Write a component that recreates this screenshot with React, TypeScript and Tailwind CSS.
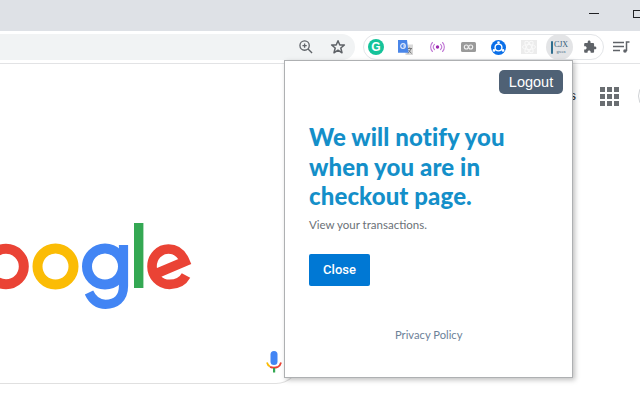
import React from "react";

function Logo() {
  return (
    <svg width="200" height="95" viewBox="0 220 200 95" fill="none" className="block">
      <circle cx="6" cy="266.5" r="17.8" stroke="#ea4335" strokeWidth="10" />
      <circle cx="55.5" cy="266.5" r="18" stroke="#fbbc05" strokeWidth="10" />
      <circle cx="105" cy="266.5" r="18" stroke="#4285f4" strokeWidth="10" />
      <path d="M123.5 245V286C123.5 299 115 304.300 105.500 304.300C97.500 304.300 92 299 89 292.500" stroke="#4285f4" strokeWidth="9.200" />
      <rect x="134" y="223" width="9.400" height="65" fill="#34a853" />
      <path d="M186 275.500C183 281 177 284.400 169.500 284.400C159.500 284.400 152 276 152 266.500C152 256.500 159.500 249 168.500 249C176 249 181.500 253 185 261.500L156.500 273.500" stroke="#ea4335" strokeWidth="9.600" />
    </svg>
  );
}

function Mic() {
  return (
    <svg width="16" height="22" viewBox="0 0 16 22" fill="none">
      <rect x="4.500" y="0" width="7" height="14" rx="3.500" fill="#4285f4" />
      <path d="M1 11.500C1.500 13.500 2.500 15 4 15.500" stroke="#fbbc05" strokeWidth="1.800" />
      <path d="M4 15.800C6.500 16.800 9.500 16.800 12 15.800C13.500 15 14.500 13.500 15 11.500" stroke="#ea4335" strokeWidth="1.800" />
      <rect x="7" y="17" width="2.200" height="4.500" fill="#34a853" />
    </svg>
  );
}

function ExtensionIcons() {
  return (
    <div className="flex h-[26px] w-[241px] items-center rounded-[13px] border border-[#e3e5e8] bg-white">
      <div className="flex h-[24px] w-[24px] items-center justify-center">
        <div className="flex h-[16px] w-[16px] items-center justify-center rounded-full bg-[#15c39a] font-['Liberation_Sans',sans-serif] text-[12px] font-bold leading-none text-white">
          G
        </div>
      </div>
      <div className="ml-[8px] flex h-[24px] w-[20px] items-center justify-center">
        <svg width="16" height="15" viewBox="0 0 16 15">
          <path d="M7.500 4.500H15V15H7.500Z" fill="#d9d9d9" />
          <path d="M9.500 8.500H14M11.700 7.500V8.500M10 13.500L13 9M10.500 10L13.500 13.500" stroke="#777" strokeWidth="1" fill="none" />
          <path d="M0 0H9L10.500 12.700H0Z" fill="#4a86e8" />
          <circle cx="5" cy="6" r="2.300" fill="none" stroke="#dfe8fb" strokeWidth="1.200" />
          <path d="M5 6H7.300" stroke="#dfe8fb" strokeWidth="1" />
        </svg>
      </div>
      <div className="ml-[11px] flex h-[24px] w-[20px] items-center justify-center">
        <svg width="15" height="12" viewBox="0 0 16 12" fill="none" stroke="#c27ad6" strokeWidth="1.200" strokeLinecap="round">
          <circle cx="8" cy="6" r="1.800" fill="#9c27b0" stroke="none" />
          <path d="M4.800 3.200A4 4 0 0 0 4.800 8.800M11.200 3.200A4 4 0 0 1 11.200 8.800" />
          <path d="M2.600 1.200A7 7 0 0 0 2.600 10.800M13.400 1.200A7 7 0 0 1 13.400 10.800" />
        </svg>
      </div>
      <div className="ml-[11px] flex h-[24px] w-[20px] items-center justify-center">
        <svg width="15" height="10" viewBox="0 0 15 10" fill="none">
          <rect width="15" height="10" rx="1.500" fill="#9a9a9a" />
          <circle cx="5.300" cy="5" r="2" stroke="#f2f2f2" strokeWidth="1.100" />
          <circle cx="9.700" cy="5" r="2" stroke="#f2f2f2" strokeWidth="1.100" />
        </svg>
      </div>
      <div className="ml-[10px] flex h-[24px] w-[20px] items-center justify-center">
        <svg width="15" height="15" viewBox="0 0 15 15" fill="none">
          <circle cx="7.500" cy="7.500" r="7.500" fill="#0a6fe8" />
          <circle cx="7.500" cy="7.500" r="3.400" stroke="#fff" strokeWidth="1.400" />
          <circle cx="7.500" cy="2.600" r="1.300" fill="#fff" />
          <circle cx="3" cy="10.400" r="1.300" fill="#fff" />
          <circle cx="12" cy="10.400" r="1.300" fill="#fff" />
        </svg>
      </div>
      <div className="ml-[11px] flex h-[24px] w-[20px] items-center justify-center">
        <svg width="16" height="14" viewBox="0 0 16 14" fill="none">
          <rect width="16" height="14" fill="#ececec" />
          <g stroke="#fafafa" strokeWidth="1">
            <ellipse cx="8" cy="7" rx="6.500" ry="2.500" />
            <ellipse cx="8" cy="7" rx="6.500" ry="2.500" transform="rotate(60 8 7)" />
            <ellipse cx="8" cy="7" rx="6.500" ry="2.500" transform="rotate(120 8 7)" />
          </g>
        </svg>
      </div>
      <div className="ml-[7px] flex h-[26px] w-[27px] items-center justify-center gap-[1px] rounded-full bg-[#e3e4e6]">
        <div className="h-[13px] w-[2px] rounded-full bg-[#2f6f8f]" />
        <div className="flex flex-col items-center font-['Liberation_Serif',serif] leading-none text-[#33607a]">
          <span className="text-[8px] leading-[9px]">CJX</span>
          <span className="text-[4px] leading-[5px]">green</span>
        </div>
      </div>
      <div className="ml-[7px] flex h-[24px] w-[20px] items-center justify-center">
        <svg width="14" height="14" viewBox="0 0 24 24" fill="#5f6368">
          <path d="M20.500 11H19V7c0-1.100-.900-2-2-2h-4V3.500C13 2.100 11.900 1 10.500 1S8 2.100 8 3.500V5H4c-1.100 0-2 .900-2 2v3.800h1.500c1.500 0 2.700 1.200 2.700 2.700S5 16.200 3.500 16.200H2V20c0 1.100.900 2 2 2h3.800v-1.500c0-1.500 1.200-2.700 2.700-2.700s2.700 1.200 2.700 2.700V22H17c1.100 0 2-.900 2-2v-4h1.500c1.400 0 2.500-1.100 2.500-2.500S21.900 11 20.500 11z" />
        </svg>
      </div>
    </div>
  );
}

export default function App() {
  return (
    <div className="relative flex h-[400px] w-[640px] flex-col overflow-hidden bg-white">
      <div className="flex h-[31px] shrink-0 items-center justify-end bg-[#dee1e6] pb-[4px]">
        <div className="mr-[34px] h-[1px] w-[10px] bg-[#202124]" />
        <div className="mr-[-3px] h-[8px] w-[10px] border border-[#202124]" />
      </div>

      <div className="flex h-[33px] shrink-0 items-center border-b border-[#e2e3e5] bg-white">
        <div className="flex h-[26px] w-[355px] items-center justify-end rounded-r-[13px] bg-[#f1f3f4] pr-[9px]">
          <svg className="mr-[17px]" width="14" height="14" viewBox="0 0 15 15" fill="none" stroke="#5f6368" strokeWidth="1.400">
            <circle cx="6" cy="6" r="5" />
            <path d="M9.700 9.700L14 14M3.700 6H8.300M6 3.700V8.300" />
          </svg>
          <svg width="16" height="16" viewBox="0 0 16 16" fill="none" stroke="#5f6368" strokeWidth="1.500" strokeLinejoin="round">
            <path d="M8 1.800L9.800 6H14.400L10.800 9L12 13.800L8 11.200L4 13.800L5.200 9L1.600 6H6.200Z" />
          </svg>
        </div>
        <div className="ml-[8px]">
          <ExtensionIcons />
        </div>
        <svg className="ml-[9px]" width="17" height="12" viewBox="0 0 17 12" fill="none" stroke="#5f6368" strokeWidth="1.300">
          <path d="M0 1.500H11M0 5.500H11M0 9.500H7" />
          <path d="M13.500 10V1H16.500" strokeWidth="1.500" />
          <circle cx="12" cy="10" r="1.800" fill="#5f6368" stroke="none" />
        </svg>
      </div>

      <div className="flex min-h-0 flex-1 flex-col">
        <div className="flex h-[48px] shrink-0 items-center justify-end pt-[16px]">
          <span className="font-['Liberation_Sans',sans-serif] text-[13px] text-[#202124]">Images</span>
          <div className="ml-[24px] grid grid-cols-3 gap-[2px]">
            {Array.from({ length: 9 }).map((_, i) => (
              <div key={i} className="h-[5px] w-[5px] bg-[#6a6e72]" />
            ))}
          </div>
          <div className="ml-[19px] mr-[-30px] h-[32px] w-[32px] shrink-0 rounded-full border border-[#cfd2d5]" />
        </div>
        <div className="mt-[108px]">
          <Logo />
        </div>
        <div className="flex h-[69px] w-[300px] items-start justify-end rounded-br-[24px] border-b border-r border-[#e0e0e0] pr-[17px] pt-[36px]">
          <Mic />
        </div>
      </div>

      <div className="absolute left-[284px] top-[60px] flex h-[318px] w-[289px] flex-col border border-[#aeb0b2] bg-white shadow-[2px_2px_5px_rgba(0,0,0,0.25)]">
        <div className="flex justify-end pr-[9px] pt-[9px]">
          <button className="h-[24px] w-[64px] rounded-[5px] bg-[#4f6175] font-['Liberation_Sans',sans-serif] text-[14.500px] leading-none text-white">
            Logout
          </button>
        </div>
        <div className="flex flex-1 flex-col pl-[24px]">
          <h1 className="mt-[28px] w-[220px] font-['Lato',sans-serif] text-[24px] font-black leading-[29.500px] tracking-[0.1px] text-[#148fc9]">
            We will notify you when you are in checkout page.
          </h1>
          <p className="mt-[6px] font-['Lato',sans-serif] text-[11.500px] leading-[16px] text-[#6b7177]">View your transactions.</p>
          <button className="mt-[21px] h-[32px] w-[61px] rounded-[2px] bg-[#0078d4] font-['Roboto',sans-serif] text-[13px] font-medium leading-none text-white">
            Close
          </button>
          <a className="mt-[41px] ml-[86px] font-['Lato',sans-serif] text-[11.200px] leading-[16px] text-[#6c8198]">Privacy Policy</a>
        </div>
      </div>
    </div>
  );
}
